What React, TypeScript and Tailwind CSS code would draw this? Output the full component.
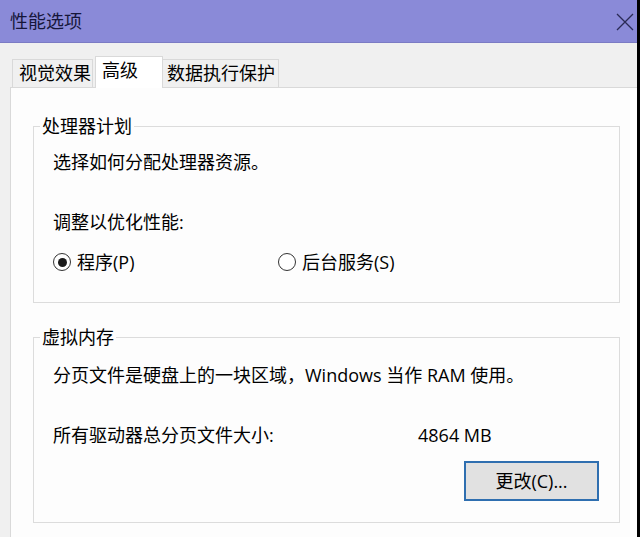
import React from "react";

const font = { fontFamily: '"Open Sans", "Noto Sans CJK SC", sans-serif' };

function Radio({ checked }: { checked?: boolean }) {
  return (
    <span className="w-[18px] h-[18px] rounded-full border border-[#333333] bg-white flex items-center justify-center shrink-0">
      {checked && <span className="w-[9px] h-[9px] rounded-full bg-[#1a1a1a]" />}
    </span>
  );
}

export default function App() {
  return (
    <div
      className="w-[640px] h-[537px] overflow-hidden flex bg-[#f0f0f0] text-[18px] text-black"
      style={font}
    >
      <div className="flex-1 flex flex-col">
        {/* Title bar */}
        <div className="h-[43px] shrink-0 bg-[#8a8ad8] border-b border-[#7b7bc4] flex items-center justify-between pl-[10px] pr-[3px]">
          <span className="text-[18px] leading-[20px] text-[#16163a]">性能选项</span>
          <svg width="18" height="18" viewBox="0 0 18 18" className="mt-[2px]">
            <path d="M1 1 L17 17 M17 1 L1 17" stroke="#2a2a55" strokeWidth="1.3" />
          </svg>
        </div>

        {/* Tabs */}
        <div className="h-[44px] shrink-0 flex items-end pl-[12px]">
          <div className="w-[81px] h-[28px] border border-b-0 border-[#d9d9d9] bg-[#f0f0f0] pl-[6px] leading-[26px]">
            视觉效果
          </div>
          <div className="w-[68px] h-[32px] ml-[2px] border border-b-0 border-[#d9d9d9] bg-white pl-[6px] leading-[26px] relative z-10 -mb-px">
            高级
          </div>
          <div className="w-[116px] h-[28px] border border-b-0 border-l-0 border-[#d9d9d9] bg-[#f0f0f0] pl-[4px] leading-[26px]">
            数据执行保护
          </div>
        </div>

        {/* Panel */}
        <div className="flex-1 ml-[10px] border-l border-t border-[#d9d9d9] bg-[#fdfdfd] pl-[22px] pr-[17px] pt-[28px]">
          <fieldset className="border border-[#dcdcdc] rounded-none">
            <legend className="ml-[6px] px-[2px] leading-[20px]">处理器计划</legend>
            <div className="pl-[19px] pt-[14px] pb-[28px]">
              <div className="leading-[24px]">选择如何分配处理器资源。</div>
              <div className="leading-[24px] mt-[36px]">调整以优化性能:</div>
              <div className="flex items-center mt-[16px] h-[24px]">
                <div className="w-[225px] flex items-center gap-[6px]">
                  <Radio checked />
                  <span className="leading-[24px]">程序(P)</span>
                </div>
                <div className="flex items-center gap-[6px]">
                  <Radio />
                  <span className="leading-[24px]">后台服务(S)</span>
                </div>
              </div>
            </div>
          </fieldset>

          <fieldset className="border border-[#dcdcdc] rounded-none mt-[24px]">
            <legend className="ml-[6px] px-[2px] leading-[20px]">虚拟内存</legend>
            <div className="pl-[19px] pr-[20px] pt-[16px] pb-[21px]">
              <div className="leading-[24px]">分页文件是硬盘上的一块区域，Windows 当作 RAM 使用。</div>
              <div className="flex leading-[24px] mt-[36px]">
                <span className="w-[365px]">所有驱动器总分页文件大小:</span>
                <span>4864 MB</span>
              </div>
              <div className="flex justify-end mt-[14px]">
                <button className="w-[135px] h-[40px] bg-[#e1e1e1] border-2 border-[#2f6fb0] text-[18px] leading-[24px] text-black">
                  更改(C)...
                </button>
              </div>
            </div>
          </fieldset>
        </div>
      </div>
      <div className="w-[3px] bg-black shrink-0" />
    </div>
  );
}
